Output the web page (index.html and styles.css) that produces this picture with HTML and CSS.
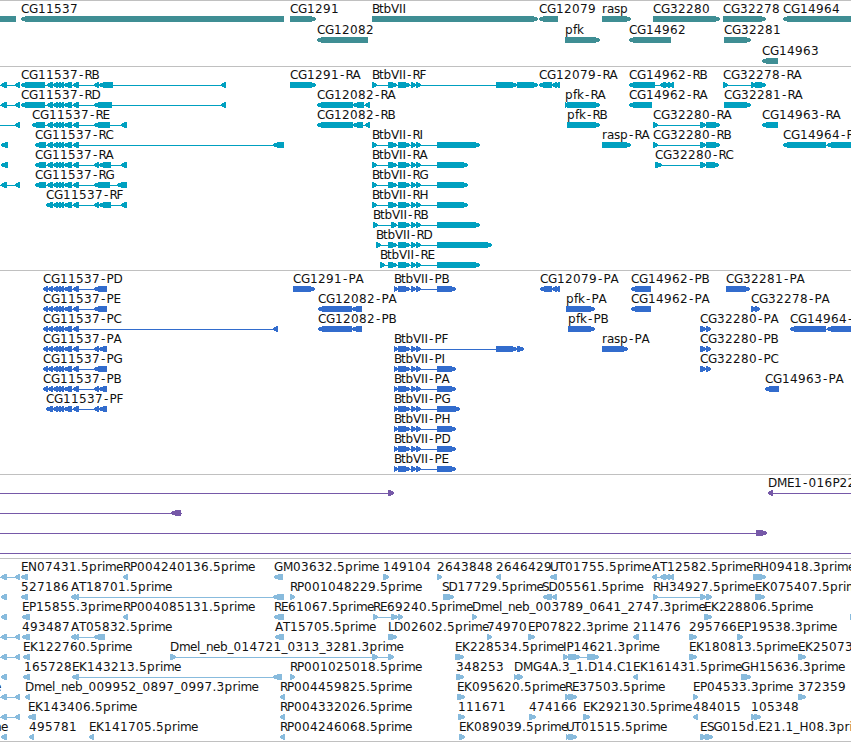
FILE: index.html
```html
<!DOCTYPE html>
<html lang="en">
<head>
  <meta charset="UTF-8" />
  <title>Genome Browser</title>
  <link rel="stylesheet" href="styles.css">
</head>
<body>

  <div class="browser">
    <div class="track genes" id="genes"></div>
    <div class="track transcripts" id="transcripts"></div>
    <div class="track proteins" id="proteins"></div>
    <div class="track clones" id="clones"></div>
    <div class="track ests" id="ests"></div>
  </div>

  <script src="tracks.js"></script>
</body>
</html>
```

FILE: styles.css
```css
body {
  margin: 0;
  background: #fff;
  overflow: hidden;
}
.browser {
  width: 851px;
  height: 742px;
  overflow: hidden;
  box-sizing: border-box;
  border-bottom: 1px solid #c0c0c0;
}
.track {
  border-top: 1px solid #c0c0c0;
  padding-bottom: 3px;
}
.row {
  display: block;
  width: 851px;
  height: 20px;
}
.row text {
  font-family: "DejaVu Sans", sans-serif;
  font-size: 12px;
  fill: #111;
}
.row polygon,
.row rect {
  shape-rendering: crispEdges;
}
.genes {
  fill: #3f8e94;
  padding-bottom: 2px;
}
.genes .row {
  height: 21px;
}
.transcripts {
  fill: #00a0c0;
}
.proteins {
  fill: #326ccd;
}
.clones {
  fill: #7659a8;
}
.ests {
  fill: #88bbdd;
  padding-bottom: 2px;
}
```

FILE: tracks.js
```js
// feature: [strand, label, exons (start, end, ...), label x, line start, line end]
const mid = [53, 58, 56, 61, 59, 64, 64, 72, 73, 79];
const m = [47, 53, ...mid];
const p = [43, 48, 48, 53, ...mid];
const b = [398, 410, 411, 416, 416, 421];
const t = [388, 397, ...b];
const pb = [394, 398, ...b];

// pieces of features that start left of the view
const edge1 = ['<', '', [1, 7]];
const edge2 = ['<', '', [1, 7, 15, 20], 0, 0, 20];

const tracks = {
  genes: [
    [['-', '', [0, 16]], ['<', 'CG11537', [21, 284]], ['>', 'CG1291', [290, 316]],
     ['>', 'BtbVII', [372, 538]], ['<', 'CG12079', [539, 558]], ['>', 'rasp', [602, 631]],
     ['>', 'CG32280', [653, 720]], ['>', 'CG32278', [723, 766]], ['<', 'CG14964', [783, 870]]],
    [['<', 'CG12082', [317, 368]], ['>', 'pfk', [565, 600]], ['<', 'CG14962', [629, 671]],
     ['>', 'CG32281', [724, 751]]],
    [['<', 'CG14963', [762, 778]]]
  ],
  transcripts: [
    [edge2, ['<', 'CG11537-RB', [21, 45, ...m, 94, 99, 99, 113, 221, 226]],
     ['>', 'CG1291-RA', [290, 316]], ['>', 'BtbVII-RF', [372, 377, ...t, 496, 517, 517, 538]],
     ['<', 'CG12079-RA', [539, 552, 552, 557, 555, 560]],
     ['<', 'CG14962-RB', [629, 655, 660, 666, 665, 670, 669, 674]],
     ['>', 'CG32278-RA', [723, 728, 751, 756, 755, 766]]],
    [edge2, ['<', 'CG11537-RD', [21, 45, ...m, 94, 112, 221, 226]],
     ['<', 'CG12082-RA', [317, 353, 353, 364, 365, 370]],
     ['>', 'pfk-RA', [565, 569, 567, 600]], ['<', 'CG14962-RA', [629, 652]],
     ['>', 'CG32281-RA', [724, 751]]],
    [['<', '', [15, 20], 0, 0, 20], ['<', 'CG11537-RE', [32, 45, ...m, 94, 110, 121, 127]],
     ['<', 'CG12082-RB', [317, 353, 353, 363, 365, 370]], ['>', 'pfk-RB', [567, 600]],
     ['>', 'CG32280-RA', [653, 658, 700, 706, 706, 720]], ['<', 'CG14963-RA', [762, 778]]],
    [['<', '', [1, 8]], ['<', 'CG11537-RC', [35, 46, ...m, 273, 284]],
     ['>', 'BtbVII-RI', [372, 377, ...t, 437, 480]], ['>', 'rasp-RA', [602, 631]],
     ['>', 'CG32280-RB', [653, 658, 700, 706, 706, 720]],
     ['<', 'CG14964-RA', [783, 826, 827, 860]]],
    [['<', '', [1, 8]], ['<', 'CG11537-RA', [35, 46, ...m, 94, 99, 99, 111, 121, 127]],
     ['>', 'BtbVII-RA', [372, 377, ...t, 437, 468]],
     ['>', 'CG32280-RC', [655, 662, 700, 706, 706, 719]]],
    [edge2, ['<', 'CG11537-RG', [35, 46, ...m, 94, 110, 117, 127]],
     ['>', 'BtbVII-RG', [372, 377, ...t, 437, 468]]],
    [['<', 'CG11537-RF', [46, 53, ...mid, 94, 99, 99, 111, 121, 127]],
     ['>', 'BtbVII-RH', [372, 377, ...t, 437, 468]]],
    [['>', 'BtbVII-RB', [373, 378, 391, 397, ...b, 437, 480]]],
    [['>', 'BtbVII-RD', [376, 381, ...t, 437, 492]]],
    [['>', 'BtbVII-RE', [380, 385, ...t, 437, 480]]]
  ],
  proteins: [
    [['<', 'CG11537-PD', [...p, 94, 107]], ['>', 'CG1291-PA', [293, 315]],
     ['>', 'BtbVII-PB', [...pb, 437, 456]], ['<', 'CG12079-PA', [540, 552, 552, 557, 555, 560]],
     ['<', 'CG14962-PB', [631, 651]], ['>', 'CG32281-PA', [726, 750]]],
    [['<', 'CG11537-PE', [...p, 94, 107]], ['<', 'CG12082-PA', [318, 352, 352, 362]],
     ['>', 'pfk-PA', [566, 595]], ['<', 'CG14962-PA', [631, 651]],
     ['>', 'CG32278-PA', [751, 756, 755, 760]]],
    [['<', 'CG11537-PC', [...p, 273, 278]], ['<', 'CG12082-PB', [318, 352, 352, 362]],
     ['>', 'pfk-PB', [568, 595]], ['>', 'CG32280-PA', [700, 706, 706, 711]],
     ['<', 'CG14964-PA', [790, 826, 827, 860]]],
    [['<', 'CG11537-PA', [...p, 94, 99, 99, 107]], ['>', 'BtbVII-PF', [...pb, 496, 517, 517, 524]],
     ['>', 'rasp-PA', [602, 628]], ['>', 'CG32280-PB', [700, 706, 706, 711]]],
    [['<', 'CG11537-PG', [...p, 94, 107]], ['>', 'BtbVII-PI', [...pb, 437, 456]],
     ['>', 'CG32280-PC', [700, 706, 706, 711]]],
    [['<', 'CG11537-PB', [...p, 94, 99, 99, 107]], ['>', 'BtbVII-PA', [...pb, 437, 456]],
     ['<', 'CG14963-PA', [765, 779]]],
    [['<', 'CG11537-PF', [46, 53, ...mid, 94, 99, 99, 107]], ['>', 'BtbVII-PG', [...pb, 437, 460]]],
    [['>', 'BtbVII-PH', [...pb, 437, 456]]],
    [['>', 'BtbVII-PD', [...pb, 437, 456]]],
    [['>', 'BtbVII-PE', [...pb, 437, 456]]]
  ],
  clones: [
    [['>', '', [388, 394], 0, 0, 394], ['<', 'DME1-016P22', [768, 773], 768, 768, 851]],
    [['<', '', [171, 181], 0, 0, 182]],
    [['>', '', [756, 767], 0, 0, 767]],
    [['>', '', [], 0, 0, 851]]
  ],
  ests: [
    [edge2, ['<', 'EN07431.5prime', [21, 28]], ['<', 'RP004240136.5prime', [123, 128]],
     ['<', 'GM03632.5prime', [274, 283]], ['>', '149104', [383, 389]], ['>', '2643848', [437, 442]],
     ['<', '2646429', [496, 501]], ['<', 'UT01755.5prime', [550, 557]],
     ['<', 'AT12582.5prime', [652, 657, 660, 666, 665, 670, 669, 674]],
     ['>', 'RH09418.3prime', [753, 766]]],
    [edge1, ['<', '527186', [21, 28]], ['<', 'AT18701.5prime', [71, 76, 74, 79, 273, 284]],
     ['>', 'RP001048229.5prime', [290, 295]], ['>', 'SD17729.5prime', [443, 454], 442],
     ['<', 'SD05561.5prime', [543, 552, 552, 557], 542],
     ['>', 'RH34927.5prime', [653, 658, 700, 706, 706, 712]], ['>', 'EK075407.5prime', [755, 765]]],
    [edge1, ['<', 'EP15855.3prime', [22, 30]], ['<', 'RP004085131.5prime', [123, 128]],
     ['<', 'RE61067.5prime', [274, 284]], ['>', 'RE69240.5prime', [373, 378, 391, 398, 398, 403]],
     ['>', 'Dmel_neb_003789_0641_2747.3prime', [472, 477]], ['>', 'EK228806.5prime', [704, 712]],
     ['>', '', [850, 855]]],
    [edge2, ['<', '493487', [22, 30]], ['<', 'AT05832.5prime', [71, 76, 74, 79, 94, 105]],
     ['<', 'AT15705.5prime', [275, 284]], ['>', 'LD02602.5prime', [388, 397]],
     ['>', '74970', [487, 492]], ['>', 'EP07822.3prime', [528, 535]], ['<', '211476', [633, 639]],
     ['>', '295766', [689, 697]], ['>', 'EP19538.3prime', [737, 743]]],
    [edge2, ['<', 'EK122760.5prime', [23, 30]],
     ['>', 'Dmel_neb_014721_0313_3281.3prime', [170, 176, 372, 378, 388, 394]],
     ['>', 'EK228534.5prime', [455, 464]],
     ['>', 'IP14621.3prime', [563, 568, 568, 580, 587, 599]],
     ['>', 'EK180813.5prime', [689, 697]], ['>', 'EK250731.5prime', [798, 806]]],
    [edge1, ['<', '165728', [23, 30], 24], ['<', 'EK143213.5prime', [72, 79, 273, 282]],
     ['>', 'RP001025018.5prime', [290, 295]], ['>', '348253', [456, 464]],
     ['>', 'DMG4A.3_1.D14.C1', [514, 518, 517, 523]], ['<', 'EK161431.5prime', [633, 638]],
     ['>', 'GH15636.3prime', [741, 751]]],
    [['<', 'prime', [1, 7, 15, 20], -33, 0, 20],
     ['<', 'Dmel_neb_009952_0897_0997.3prime', [25, 30]], ['<', 'RP004459825.5prime', [280, 285]],
     ['>', 'EK095620.5prime', [457, 465]], ['>', 'RE37503.5prime', [565, 570, 568, 577]],
     ['>', 'EP04533.3prime', [693, 698]], ['>', '372359', [798, 806]]],
    [edge2, ['<', 'EK143406.5prime', [28, 36]], ['<', 'RP004332026.5prime', [280, 285]],
     ['>', '111671', [458, 465]], ['>', '474166', [529, 536]], ['>', 'EK292130.5prime', [583, 590]],
     ['<', '484015', [693, 698]], ['>', '105348', [751, 756, 754, 761]]],
    [['<', 'prime', [1, 7], -26], ['<', '495781', [29, 34]], ['<', 'EK141705.5prime', [89, 94]],
     ['<', 'RP004246068.5prime', [280, 285]], ['>', 'EK089039.5prime', [459, 465]],
     ['>', 'UT01515.5prime', [566, 570, 568, 577]],
     ['>', 'ESG015d.E21.1_H08.3prime', [700, 706, 705, 713]]]
  ]
};

// label character widths, 8 for anything not listed
const widths = {
  G: 9, D: 9, N: 9, H: 9, M: 10, R: 7, P: 7, B: 7, E: 7, F: 7, S: 6.5, T: 7, L: 6, I: 3.5,
  '-': 6.5, '.': 4, '_': 6, t: 4.5, b: 7.5, f: 4, k: 7, r: 5, i: 3, m: 11, e: 7, l: 3, n: 7, a: 7, s: 6
};

function drawLabel(text, x) {
  const xs = [];
  for (const ch of text) {
    // center the hyphen in its space
    xs.push(ch === '-' ? x + 1 : x);
    x += widths[ch] || 8;
  }
  return `<text x="${xs.join(' ')}" y="12">${text}</text>`;
}

// blunt arrow head, 2px high at the tip
function drawExon(strand, a, z) {
  const tip = z - a > 6 ? 5 : 4;
  if (strand === '<') {
    return `<polygon points="${a},17 ${a + tip},15 ${z},15 ${z},21 ${a + tip},21 ${a},19"/>`;
  }
  if (strand === '>') {
    return `<polygon points="${z},17 ${z - tip},15 ${a},15 ${a},21 ${z - tip},21 ${z},19"/>`;
  }
  return `<rect x="${a}" y="15" width="${z - a}" height="6"/>`;
}

function drawFeature([strand, label, exons, labelX, from, to]) {
  let svg = '';
  if (from === undefined) {
    from = exons[0];
    to = exons[exons.length - 1];
  }
  svg += `<rect x="${from}" y="18" width="${to - from}" height="1"/>`;
  for (let i = 0; i < exons.length; i += 2) {
    svg += drawExon(strand, exons[i], exons[i + 1]);
  }
  if (label) {
    svg += drawLabel(label, labelX === undefined ? exons[0] : labelX);
  }
  return svg;
}

for (const [id, rows] of Object.entries(tracks)) {
  document.getElementById(id).innerHTML = rows
    .map(row => `<svg class="row" overflow="visible">${row.map(drawFeature).join('')}</svg>`)
    .join('');
}
```
